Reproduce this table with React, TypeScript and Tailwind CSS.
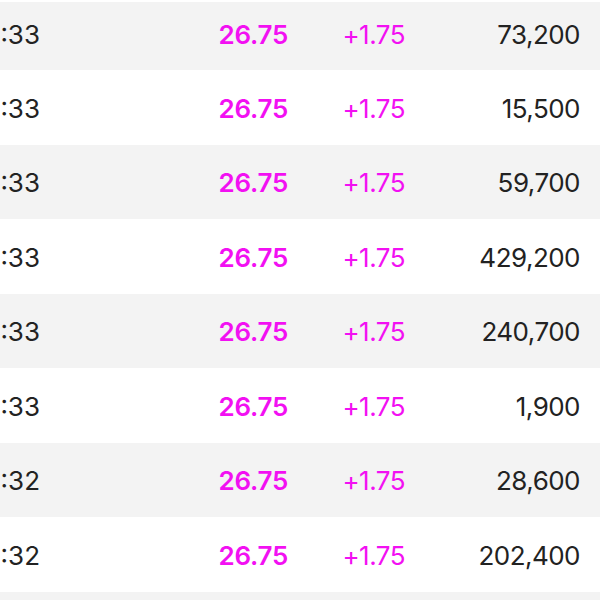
import React from "react";

const rows = [
  { t: "15:33", v: "73,200" },
  { t: "15:33", v: "15,500" },
  { t: "15:33", v: "59,700" },
  { t: "15:33", v: "429,200" },
  { t: "15:33", v: "240,700" },
  { t: "15:33", v: "1,900" },
  { t: "15:32", v: "28,600" },
  { t: "15:32", v: "202,400" },
  { t: "15:32", v: "10,000" },
];

export default function App() {
  return (
    <div
      className="w-[600px] h-[600px] overflow-hidden bg-white"
      style={{ fontFamily: "Inter, 'Noto Sans', sans-serif" }}
    >
      <div className="h-[2px] bg-white" />
      {rows.map((r, i) => (
        <div
          key={i}
          className={`flex items-center text-[26px] leading-none ${
            i === 0 ? "h-[68px] pb-[2px]" : "h-[74.5px] pt-[3px]"
          } ${i % 2 === 0 ? "bg-[#f3f3f3]" : "bg-white"}`}
        >
          <div className="w-[40px] shrink-0 flex justify-end text-[#222222] whitespace-nowrap">
            {r.t}
          </div>
          <div className="w-[248px] shrink-0 text-right font-semibold tracking-[-0.01em] text-[#f210f2]">
            26.75
          </div>
          <div className="w-[117px] shrink-0 text-right tracking-[-0.02em] text-[#f210f2]">
            +1.75
          </div>
          <div className="w-[175px] shrink-0 text-right tracking-[-0.02em] text-[#222222]">
            {r.v}
          </div>
        </div>
      ))}
    </div>
  );
}
